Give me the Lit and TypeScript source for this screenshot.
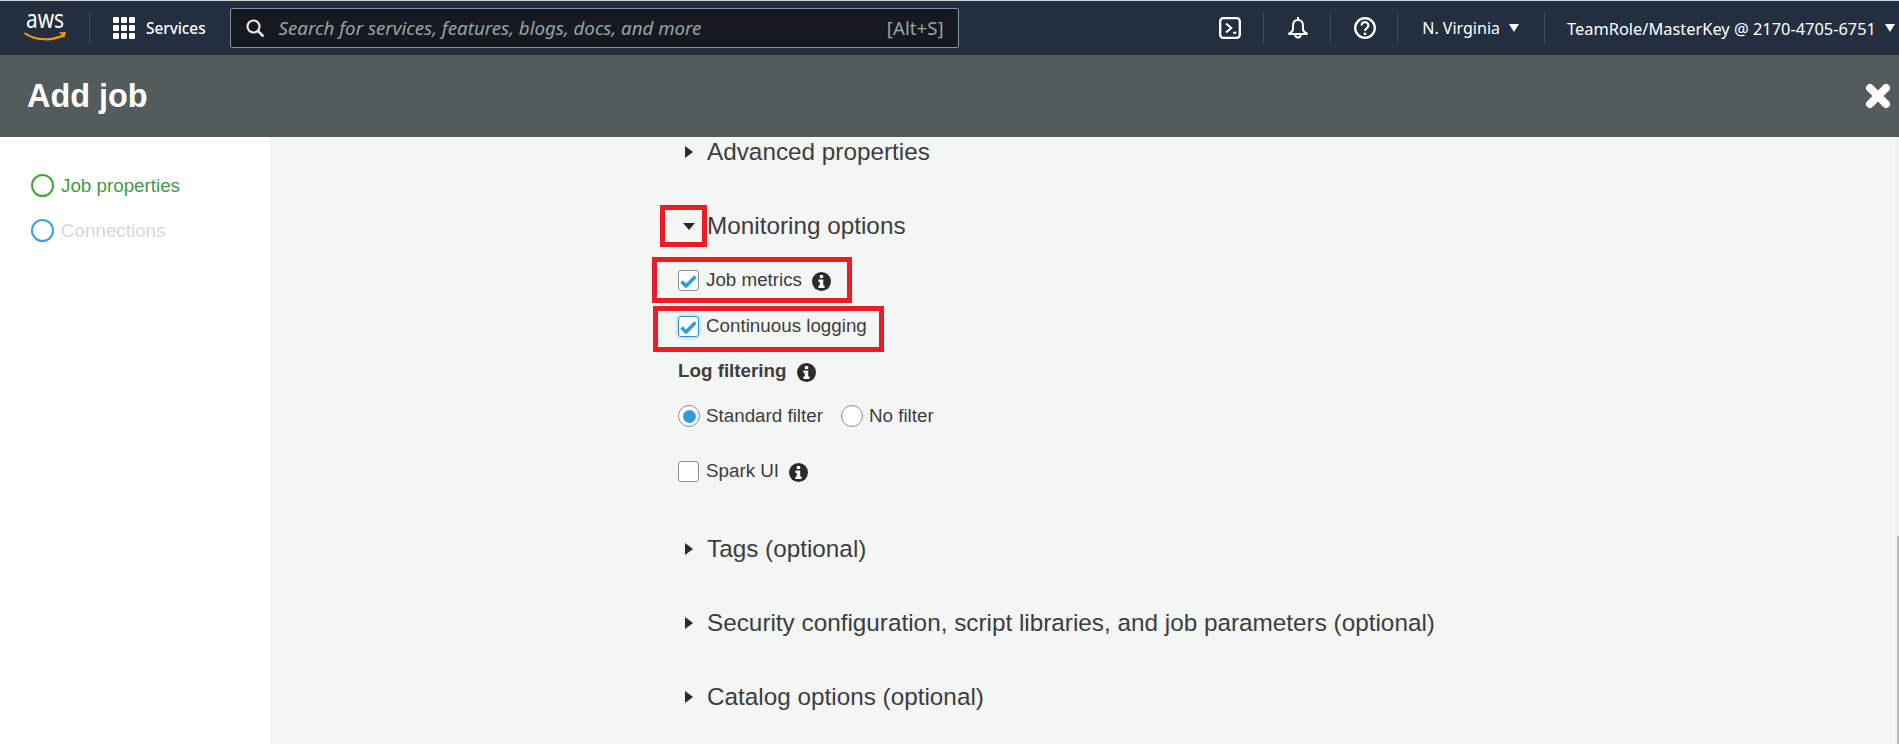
import { LitElement, html, css, svg } from "lit";
import { customElement } from "lit/decorators.js";

const INFO = svg`<svg class="info" viewBox="0 0 20 20"><circle cx="10" cy="10" r="10" fill="#2b2b2b"/><rect x="8.2" y="3.2" width="3.6" height="3.2" rx=".6" fill="#fff"/><path d="M6.8 8h5v6.2h1.4v2.6H6.8v-2.6h1.4v-3.6H6.8z" fill="#fff"/></svg>`;
const CHECK = svg`<svg class="tick" viewBox="0 0 21 21"><path d="M3.500 11.500L8 16l9.500-9.500" fill="none" stroke="#2f9bdc" stroke-width="3.400"/></svg>`;

@customElement("app-root")
export class AppRoot extends LitElement {
  static styles = css`
    :host { display: block; width: 1899px; height: 744px; overflow: hidden; position: relative; background: #fff; font-family: "Liberation Sans", Arial, sans-serif; }
    .topline { height: 1px; background: #d5d9d9; }
    nav { height: 54px; background: #232f3e; display: flex; align-items: center; color: #fff; font-family: "Noto Sans", sans-serif; font-size: 16px; }
    .logo { width: 44px; height: 28px; margin-left: 23px; overflow: visible; flex: none; }
    .sep { width: 1px; height: 30px; background: #414d5c; flex: none; }
    .logo + .sep { margin-left: 22px; }
    .grid { display: grid; grid-template-columns: repeat(3, 6px); grid-auto-rows: 6px; gap: 2px; margin-left: 23px; }
    .grid i { background: #fff; border-radius: 1px; }
    .svc { margin-left: 11px; font-size: 15.300px; font-weight: 500; }
    .search { width: 729px; height: 40px; box-sizing: border-box; margin-left: 24px; border: 1px solid #879596; border-radius: 2px; background: #16191f; display: flex; align-items: center; padding: 0 14px 0 15px; color: #95a5a6; font-size: 18.700px; line-height: 36px; }
    .search svg { width: 18px; height: 18px; margin-right: 15px; flex: none; }
    .search em { flex: 1; font-style: italic; white-space: nowrap; }
    .right { margin-left: auto; display: flex; align-items: center; }
    .ico { width: 22px; height: 22px; flex: none; }
    .t { margin-right: 22px; }
    .mid { margin: 0 21px 0 23px; }
    .reg { margin: 0 25px 0 24px; display: flex; align-items: center; }
    .caret { margin-left: 9px; width: 0; height: 0; border-left: 5.500px solid transparent; border-right: 5.500px solid transparent; border-top: 8px solid #fff; }
    .acct { margin: 0 4px 0 22px; display: flex; align-items: center; font-size: 16.400px; white-space: nowrap; }
    header { height: 82px; background: #545b5d; color: #fff; display: flex; align-items: center; justify-content: space-between; padding: 0 7px 0 27px; }
    h1 { margin: 0; font-size: 32.400px; font-weight: 700; }
    .x { width: 28px; height: 28px; }
    .body { display: flex; height: 607px; }
    aside { width: 270px; padding: 37px 0 0 31px; box-sizing: border-box; display: flex; flex-direction: column; gap: 22px; font-size: 18.800px; }
    .step { display: flex; align-items: center; gap: 7px; height: 23px; }
    .ring { width: 23px; height: 23px; box-sizing: border-box; border-radius: 50%; border: 2px solid; flex: none; }
    .s1 { color: #3a9e3f; } .s1 .ring { border-color: #3aaa2e; }
    .s2 { color: #d5d9d9; } .s2 .ring { border-color: #3a9fe0; }
    main { flex: 1; background: #f4f6f6; padding-left: 408px; position: relative; color: #3d3d3d; }
    .sec { display: flex; align-items: center; font-size: 24.300px; height: 28px; }
    .tri { width: 0; height: 0; border-top: 6px solid transparent; border-bottom: 6px solid transparent; border-left: 8px solid #2b2b2b; margin: 0 14px 0 7px; }
    .down { width: 0; height: 0; border-left: 6px solid transparent; border-right: 6px solid transparent; border-top: 7px solid #2b2b2b; margin: 0 12px 0 5px; }
    .adv { margin-top: 1px; }
    .mon { margin-top: 46px; }
    .row { display: flex; align-items: center; font-size: 18.800px; height: 24px; }
    .box { width: 21px; height: 21px; box-sizing: border-box; border: 1px solid #8a8f8f; border-radius: 3px; background: #fff; margin-right: 7px; flex: none; }
    .tick { display: block; margin: -1px; width: 21px; height: 21px; }
    .focus { border-color: #2f8fe0; box-shadow: 0 0 4px #8ec5f0; }
    .info { width: 19px; height: 19px; margin: 2px 0 0 10px; flex: none; }
    .jm { margin-top: 28px; } .cl { margin-top: 22px; }
    .lf { margin-top: 21px; font-weight: 700; }
    .rad { margin-top: 21px; }
    .radio { width: 22px; height: 22px; box-sizing: border-box; border: 1px solid #8a8f8f; border-radius: 50%; background: #fff; margin-right: 6px; display: flex; align-items: center; justify-content: center; flex: none; }
    .radio i { width: 13px; height: 13px; border-radius: 50%; background: #2f9bdc; }
    .r2 { margin-left: 18px; }
    .sp { margin-top: 31px; }
    .tags { margin-top: 52px; } .sc { margin-top: 46px; } .ca { margin-top: 46px; }
    .red { position: absolute; box-sizing: border-box; border: 5px solid #ed1c24; }
    .red.a { left: 390px; top: 68px; width: 47px; height: 42px; }
    .red.b { left: 382px; top: 120px; width: 200px; height: 46px; }
    .red.c { left: 383px; top: 169px; width: 231px; height: 46px; }
    .track { position: absolute; right: 0; top: 0; bottom: 0; width: 4px; background: #f0f0f0; }
    .thumb { position: absolute; right: 0; top: 399px; bottom: 0; width: 2px; background: #bdbdbd; }
  `;

  render() {
    return html`
      <div class="topline"></div>
      <nav>
        <svg class="logo" viewBox="0 0 44 28">
          <text x="3" y="14" textLength="38" lengthAdjust="spacingAndGlyphs" fill="#fff" font-family="Noto Sans, sans-serif" font-size="25">aws</text>
          <path d="M1.500 19C12 27 30 27 41 21" fill="none" stroke="#f90" stroke-width="2.200"/>
          <path d="M35.500 18.500l7.500-.5-2 6.500-1.500-3.500z" fill="#f90"/>
        </svg>
        <div class="sep"></div>
        <div class="grid">${Array.from({ length: 9 }, () => html`<i></i>`)}</div>
        <span class="svc">Services</span>
        <div class="search">
          <svg viewBox="0 0 18 18"><circle cx="7.500" cy="7.500" r="6" fill="none" stroke="#e8eaea" stroke-width="2.200"/><path d="M12 12l5.500 5.500" stroke="#e8eaea" stroke-width="2.600"/></svg>
          <em>Search for services, features, blogs, docs, and more</em>
          <span>[Alt+S]</span>
        </div>
        <div class="right">
          <svg class="ico t" viewBox="0 0 22 22"><rect x="1.200" y="1.200" width="19.600" height="19.600" rx="3" fill="none" stroke="#fff" stroke-width="2.300"/><path d="M7 6.500l5.300 4.500L7 15.500M14 15.800h3.300" fill="none" stroke="#fff" stroke-width="2"/></svg>
          <div class="sep"></div>
          <svg class="ico mid" viewBox="0 0 22 22"><path d="M11 0v3M11 3C7.500 3 6 5.800 6 9v3c0 2-1.500 3.500-4.500 5h19c-3-1.500-4.500-3-4.500-5V9c0-3.200-1.500-6-5-6zM8 17a3 3.500 0 0 0 6 0" fill="none" stroke="#fff" stroke-width="2"/></svg>
          <div class="sep"></div>
          <svg class="ico mid" viewBox="0 0 22 22"><circle cx="11" cy="11" r="9.800" fill="none" stroke="#fff" stroke-width="2.300"/><path d="M7.600 8.400a3.400 3.300 0 1 1 5.300 2.700c-1.300.9-1.900 1.500-1.900 3" fill="none" stroke="#fff" stroke-width="2.200"/><circle cx="11" cy="16.800" r="1.400" fill="#fff"/></svg>
          <div class="sep"></div>
          <div class="reg">N. Virginia<span class="caret"></span></div>
          <div class="sep"></div>
          <div class="acct">TeamRole/MasterKey @ 2170-4705-6751<span class="caret"></span></div>
        </div>
      </nav>
      <header>
        <h1>Add job</h1>
        <svg class="x" viewBox="0 0 28 28"><path d="M6 6l16 16M22 6L6 22" stroke="#fff" stroke-width="8" stroke-linecap="round"/></svg>
      </header>
      <div class="body">
        <aside>
          <div class="step s1"><span class="ring"></span>Job properties</div>
          <div class="step s2"><span class="ring"></span>Connections</div>
        </aside>
        <main>
          <div class="sec adv"><span class="tri"></span>Advanced properties</div>
          <div class="sec mon"><span class="down"></span>Monitoring options</div>
          <div class="row jm"><span class="box">${CHECK}</span>Job metrics${INFO}</div>
          <div class="row cl"><span class="box focus">${CHECK}</span>Continuous logging</div>
          <div class="row lf">Log filtering${INFO}</div>
          <div class="row rad"><span class="radio"><i></i></span>Standard filter<span class="radio r2"></span>No filter</div>
          <div class="row sp"><span class="box"></span>Spark UI${INFO}</div>
          <div class="sec tags"><span class="tri"></span>Tags (optional)</div>
          <div class="sec sc"><span class="tri"></span>Security configuration, script libraries, and job parameters (optional)</div>
          <div class="sec ca"><span class="tri"></span>Catalog options (optional)</div>
          <div class="red a"></div><div class="red b"></div><div class="red c"></div>
          <div class="track"></div><div class="thumb"></div>
        </main>
      </div>
    `;
  }
}
